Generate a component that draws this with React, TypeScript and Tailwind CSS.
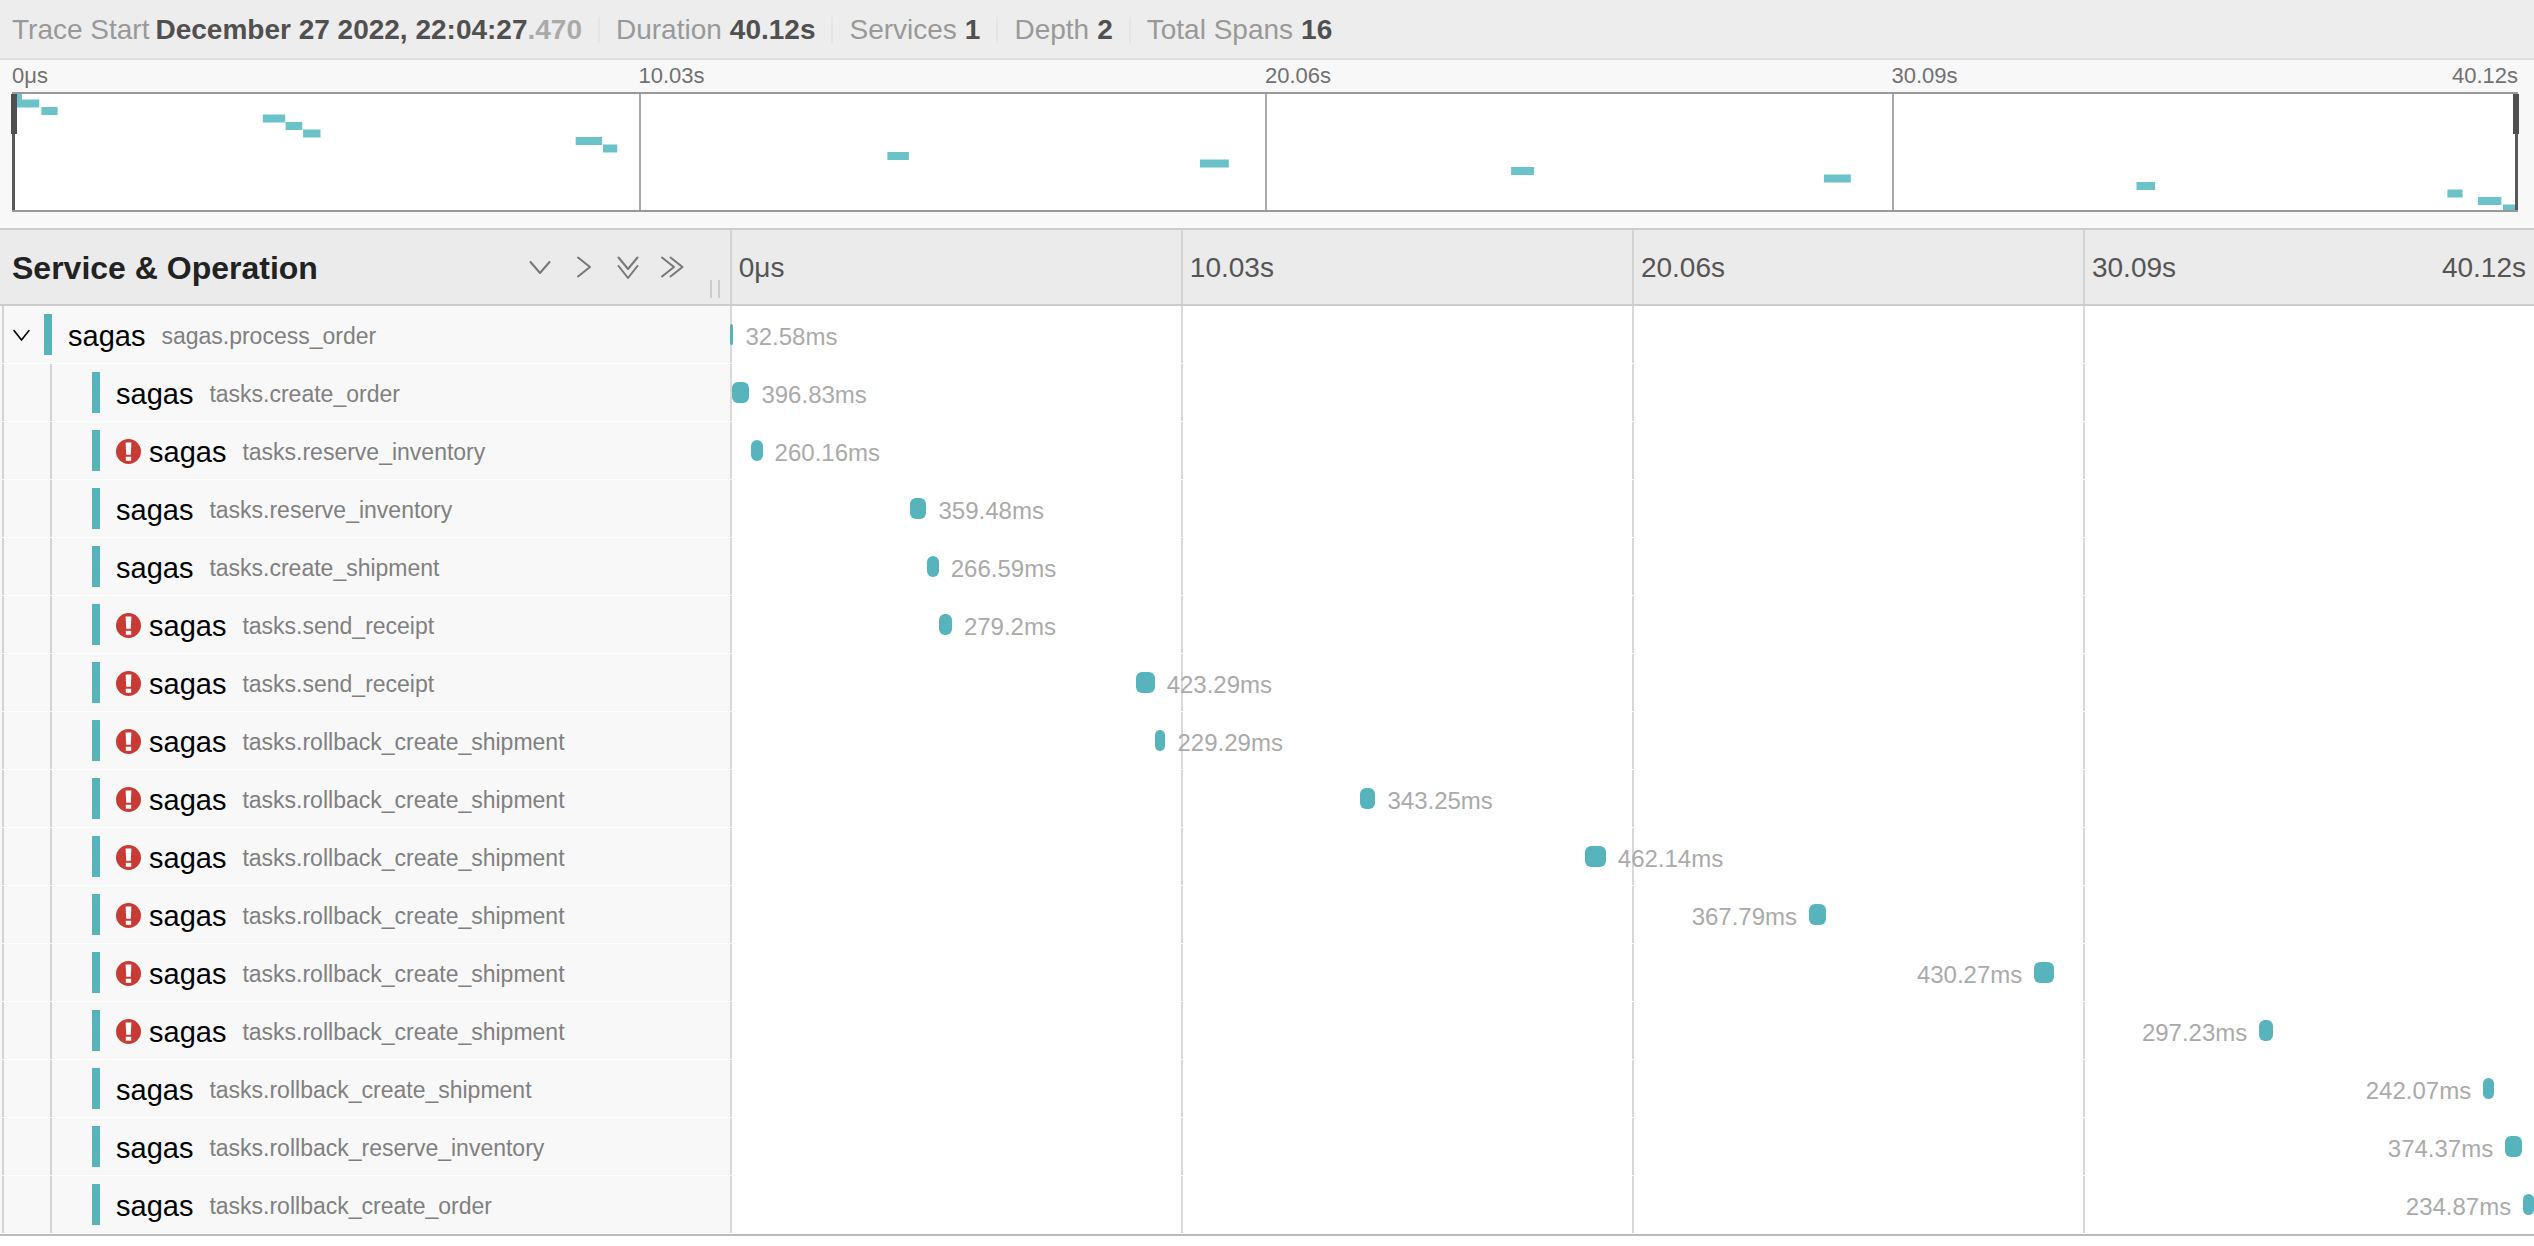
type Span = { op: string; start: number; dur: number; label: string; error?: boolean };

const TOTAL = 40120;

const SPANS: Span[] = [
  { op: "sagas.process_order", start: 0, dur: 80, label: "32.58ms" },
  { op: "tasks.create_order", start: 40, dur: 396.83, label: "396.83ms" },
  { op: "tasks.reserve_inventory", start: 470, dur: 260.16, label: "260.16ms", error: true },
  { op: "tasks.reserve_inventory", start: 4015, dur: 359.48, label: "359.48ms" },
  { op: "tasks.create_shipment", start: 4380, dur: 266.59, label: "266.59ms" },
  { op: "tasks.send_receipt", start: 4660, dur: 279.2, label: "279.2ms", error: true },
  { op: "tasks.send_receipt", start: 9025, dur: 423.29, label: "423.29ms", error: true },
  { op: "tasks.rollback_create_shipment", start: 9460, dur: 229.29, label: "229.29ms", error: true },
  { op: "tasks.rollback_create_shipment", start: 14015, dur: 343.25, label: "343.25ms", error: true },
  { op: "tasks.rollback_create_shipment", start: 19018, dur: 462.14, label: "462.14ms", error: true },
  { op: "tasks.rollback_create_shipment", start: 24000, dur: 367.79, label: "367.79ms", error: true },
  { op: "tasks.rollback_create_shipment", start: 29008, dur: 430.27, label: "430.27ms", error: true },
  { op: "tasks.rollback_create_shipment", start: 34012, dur: 297.23, label: "297.23ms", error: true },
  { op: "tasks.rollback_create_shipment", start: 38990, dur: 242.07, label: "242.07ms" },
  { op: "tasks.rollback_reserve_inventory", start: 39480, dur: 374.37, label: "374.37ms" },
  { op: "tasks.rollback_create_order", start: 39880, dur: 234.87, label: "234.87ms" },
];

const TICKS = ["0μs", "10.03s", "20.06s", "30.09s"];
const END = "40.12s";

const pct = (v: number) => `${(v / TOTAL) * 100}%`;

function Chevron({ d, size }: { d: string; size: string }) {
  return (
    <svg viewBox="0 0 24 24" className={size} fill="none" stroke="currentColor" strokeWidth="2" strokeLinecap="round" strokeLinejoin="round" aria-hidden="true">
      <path d={d} />
    </svg>
  );
}

const CONTROLS = [
  { label: "Expand +1", d: "M2.5 7 L12 18 L21.5 7" },
  { label: "Collapse +1", d: "M6 2.5 L18 12 L6 21.5" },
  { label: "Expand All", d: "M2.5 2.5 L12 14 L21.5 2.5 M2.5 11 L12 23 L21.5 11" },
  { label: "Collapse All", d: "M2 2.5 L14 12 L2 21.5 M10.5 2.5 L22.5 12 L10.5 21.5" },
];

function ErrorIcon() {
  return (
    <svg viewBox="0 0 25 25" className="mr-2 size-[25px] shrink-0" role="img" aria-label="Error">
      <circle cx="12.5" cy="12.5" r="12.5" fill="#c93a34" />
      <path d="M9.6 3.5 H15.4 L14.8 15.8 H10.2 Z M9.8 17.7 H15.2 V21.8 H9.8 Z" fill="#fff" />
    </svg>
  );
}

function Summary() {
  const items = [
    { k: "Trace Start", v: "December 27 2022, 22:04:27", tail: ".470" },
    { k: "Duration", v: "40.12s" },
    { k: "Services", v: "1" },
    { k: "Depth", v: "2" },
    { k: "Total Spans", v: "16" },
  ];
  return (
    <header className="flex h-[60px] items-center border-b-2 border-[#e0e0e0] bg-[#ededed] px-3 pt-0.5 text-[28px] leading-[32px]">
      <dl className="flex items-center divide-x-2 divide-[#e5e5e5]">
        {items.map((it) => (
          <div key={it.k} className="flex h-[26px] items-center gap-2 px-4 whitespace-nowrap first:gap-1.5 first:pl-0">
            <dt className="text-[#999]">{it.k}</dt>
            <dd className="font-bold text-[#505050]">
              {it.v}
              {it.tail && <span className="text-[#aaa]">{it.tail}</span>}
            </dd>
          </div>
        ))}
      </dl>
    </header>
  );
}

function Minimap() {
  return (
    <section aria-label="Trace overview" className="border-b-2 border-[#ccc] bg-[#f8f8f8] pt-0.5 pr-4 pb-4 pl-3">
      <div className="relative mb-0.5 flex h-7 items-center text-[22px] leading-7 text-[#717171]">
        {TICKS.map((t) => (
          <span key={t} className="flex-1">{t}</span>
        ))}
        <span className="absolute right-0">{END}</span>
      </div>
      <div className="relative h-[120px] border-y-2 border-[#999] bg-white">
        <div className="flex h-full">
          {TICKS.map((t) => (
            <div key={t} className="flex-1 border-l-2 border-[#aaa]" />
          ))}
        </div>
        <svg className="absolute inset-0 size-full" viewBox={`0 1 ${TOTAL} 58`} preserveAspectRatio="none" aria-hidden="true">
          {SPANS.map((s, i) => (
            <rect key={i} x={s.start} y={i * 3.75} width={Math.max(s.dur, 160)} height="4" fill="#6cc2c9" />
          ))}
        </svg>
        <div className="absolute top-0 left-0 h-full w-[3px] bg-[#595959]" />
        <div className="absolute top-0 -left-px h-10 w-[6px] bg-[#4f4f4f]" />
        <div className="absolute top-0 right-0 h-full w-[3px] bg-[#595959]" />
        <div className="absolute top-0 -right-px h-10 w-[6px] bg-[#4f4f4f]" />
      </div>
    </section>
  );
}

function TimelineHeader() {
  return (
    <div className="flex h-[76px] border-b-2 border-[#ccc] bg-[#ebebeb]">
      <div className="relative flex w-[28.8%] shrink-0 items-center justify-between pr-[46px] pl-3">
        <h2 className="pt-0.5 text-[32px] leading-10 font-bold text-[#222]">Service &amp; Operation</h2>
        <div className="flex gap-5 text-[#777]">
          {CONTROLS.map((c) => (
            <button key={c.label} type="button" aria-label={c.label} title={c.label}>
              <Chevron d={c.d} size="size-6" />
            </button>
          ))}
        </div>
        <div className="absolute right-[10px] bottom-[6px] h-[18px] w-[10px] cursor-col-resize border-x-2 border-[#ccc]" />
      </div>
      <div className="relative flex flex-1 text-[28px] leading-10 text-[#555]">
        {TICKS.map((t) => (
          <div key={t} className="flex flex-1 items-center border-l-2 border-[#d3d3d3] pt-0.5 pl-[7px]">{t}</div>
        ))}
        <div className="absolute inset-y-0 right-2 flex items-center pt-0.5">{END}</div>
      </div>
    </div>
  );
}

function Row({ span, root }: { span: Span; root: boolean }) {
  const left = span.start > TOTAL / 2;
  return (
    <div className="flex h-[58px] border-b border-white">
      <div className="flex w-[28.8%] shrink-0 items-center bg-[#f8f8f8] pl-[2px]">
        <div className="flex h-full w-[42px] shrink-0 items-center border-l-2 border-[#d3d3d3] pl-2">
          {root && (
            <button type="button" aria-label="Collapse children" className="text-black">
              <Chevron d="M2.5 7 L12 19 L21.5 7" size="size-[19px]" />
            </button>
          )}
        </div>
        {!root && <div className="ml-[6px] h-full w-[42px] shrink-0 border-l-2 border-[#d3d3d3]" />}
        <a href="#span" className="flex h-[41px] items-center border-l-8 border-[#58b4bc] pt-0.5 pl-4 whitespace-nowrap">
          {span.error && <ErrorIcon />}
          <span className="text-[29px] leading-8 text-black">sagas</span>
          <small className="ml-4 text-[23px] leading-8 text-[#808080]">{span.op}</small>
        </a>
      </div>
      <div className="relative flex flex-1">
        {TICKS.map((t) => (
          <div key={t} className="flex-1 border-l-2 border-[#d8d8d8]" />
        ))}
        <div
          className="absolute top-[18px] h-[21px] rounded-[6px] bg-[#58b4bc]"
          style={{ left: pct(span.start), width: pct(span.dur) }}
        >
          <span
            className={
              left
                ? "absolute -top-[3px] right-full pr-3 text-[24px] leading-8 text-[#aaa]"
                : "absolute -top-[3px] left-full pl-3 text-[24px] leading-8 text-[#aaa]"
            }
          >
            {span.label}
          </span>
        </div>
      </div>
    </div>
  );
}

export default function App() {
  return (
    <main className="min-h-screen overflow-hidden bg-white font-['Liberation_Sans',Arial,sans-serif]">
      <Summary />
      <Minimap />
      <section aria-label="Trace timeline" className="border-b-2 border-[#bbb]">
        <TimelineHeader />
        {SPANS.map((s, i) => (
          <Row key={i} span={s} root={i === 0} />
        ))}
      </section>
    </main>
  );
}
